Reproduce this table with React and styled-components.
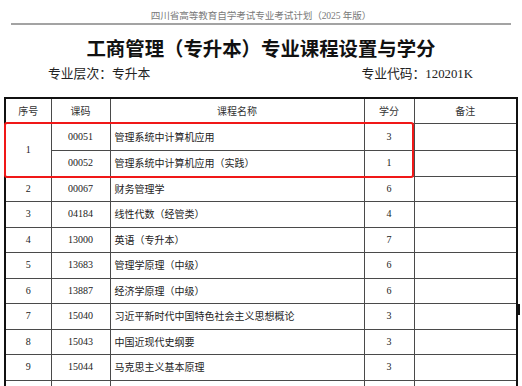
import React from "react";
import styled, { createGlobalStyle } from "styled-components";

const Global = createGlobalStyle`
  html, body { margin: 0; padding: 0; background: #fff; }
  body { width: 522px; height: 386px; overflow: hidden; font-family: "Noto Sans CJK SC", sans-serif; color: #222; }
`;

const Page = styled.div`
  width: 522px;
  height: 386px;
  overflow: hidden;
  padding-top: 9px;
  box-sizing: border-box;
`;

const Running = styled.div`
  text-align: center;
  font-size: 9.6px;
  line-height: 13px;
  color: #7a7a7a;
  font-family: "Liberation Serif", "Noto Sans CJK SC", serif;
  letter-spacing: -0.1px;
`;

const Rule = styled.div`
  margin: 1px 11px 0 11px;
  height: 2px;
  background: #a3a3a3;
`;

const Title = styled.h1`
  margin: 10px 0 0 0;
  text-align: center;
  font-size: 19.4px;
  line-height: 26px;
  font-weight: 700;
  color: #111;
  font-family: "Noto Sans CJK SC", sans-serif;
`;

const Info = styled.div`
  display: flex;
  justify-content: space-between;
  padding: 0 49px 0 48px;
  margin-top: 5px;
  font-size: 12.8px;
  line-height: 16px;
  color: #222;
  font-family: "Liberation Serif", "Noto Sans CJK SC", serif;
`;

const TableWrap = styled.div`
  position: relative;
  margin: 15px 4px 0 4px;
`;

const Table = styled.table`
  width: 514px;
  border-collapse: collapse;
  table-layout: fixed;
  border: 2px solid #111;
  border-bottom: none;
`;

const Row = styled.tr`
  height: ${(p) => p.$h || 25.5}px;
`;

const Cell = styled.td`
  border: 1px solid #4a4a4a;
  padding: 0;
  font-size: 10px;
  line-height: 12px;
  color: #222;
  text-align: ${(p) => (p.$left ? "left" : "center")};
  padding-left: ${(p) => (p.$left ? "4px" : "0")};
  font-family: ${(p) =>
    p.$num ? `"Liberation Serif", serif` : `"Noto Sans CJK SC", sans-serif`};
  white-space: nowrap;
  overflow: hidden;
`;

const StubCell = styled.td`
  border-left: 1px solid #4a4a4a;
  border-right: 1px solid #4a4a4a;
  border-top: 1px solid #4a4a4a;
  padding: 0;
  height: 6px;
  font-size: 0;
  line-height: 0;
`;

const HeadCell = styled.th`
  border: 1px solid #4a4a4a;
  border-top: 2px solid #111;
  padding: 0;
  font-size: 10px;
  font-weight: 400;
  color: #333;
  font-family: "Noto Sans CJK SC", sans-serif;
`;

const Highlight = styled.div`
  position: absolute;
  left: 0px;
  top: 25px;
  width: 406px;
  height: 52px;
  border: 2px solid #f01818;
  border-radius: 3px;
  pointer-events: none;
`;

const EdgeMark = styled.div`
  position: absolute;
  right: -2px;
  top: 207px;
  width: 2px;
  height: 11px;
  background: #111;
`;

const rows = [
  { no: "2", code: "00067", name: "财务管理学", credit: "6" },
  { no: "3", code: "04184", name: "线性代数（经管类）", credit: "4" },
  { no: "4", code: "13000", name: "英语（专升本）", credit: "7" },
  { no: "5", code: "13683", name: "管理学原理（中级）", credit: "6" },
  { no: "6", code: "13887", name: "经济学原理（中级）", credit: "6" },
  { no: "7", code: "15040", name: "习近平新时代中国特色社会主义思想概论", credit: "3" },
  { no: "8", code: "15043", name: "中国近现代史纲要", credit: "3" },
  { no: "9", code: "15044", name: "马克思主义基本原理", credit: "3" },
];

export default function App() {
  return (
    <Page>
      <Global />
      <Running>四川省高等教育自学考试专业考试计划（2025 年版）</Running>
      <Rule />
      <Title>工商管理（专升本）专业课程设置与学分</Title>
      <Info>
        <span>专业层次：专升本</span>
        <span>专业代码：120201K</span>
      </Info>
      <TableWrap>
        <Table>
          <colgroup>
            <col style={{ width: 46 }} />
            <col style={{ width: 59 }} />
            <col style={{ width: 254 }} />
            <col style={{ width: 50 }} />
            <col />
          </colgroup>
          <thead>
            <Row $h={25}>
              <HeadCell>序号</HeadCell>
              <HeadCell>课码</HeadCell>
              <HeadCell>课程名称</HeadCell>
              <HeadCell>学分</HeadCell>
              <HeadCell>备注</HeadCell>
            </Row>
          </thead>
          <tbody>
            <Row $h={27}>
              <Cell $num rowSpan={2}>1</Cell>
              <Cell $num>00051</Cell>
              <Cell $left>管理系统中计算机应用</Cell>
              <Cell $num>3</Cell>
              <Cell />
            </Row>
            <Row $h={26}>
              <Cell $num>00052</Cell>
              <Cell $left>管理系统中计算机应用（实践）</Cell>
              <Cell $num>1</Cell>
              <Cell />
            </Row>
            {rows.map((r) => (
              <Row key={r.no}>
                <Cell $num>{r.no}</Cell>
                <Cell $num>{r.code}</Cell>
                <Cell $left>{r.name}</Cell>
                <Cell $num>{r.credit}</Cell>
                <Cell />
              </Row>
            ))}
            <Row $h={6}>
              <StubCell />
              <StubCell />
              <StubCell />
              <StubCell />
              <StubCell />
            </Row>
          </tbody>
        </Table>
        <Highlight />
        <EdgeMark />
      </TableWrap>
    </Page>
  );
}
